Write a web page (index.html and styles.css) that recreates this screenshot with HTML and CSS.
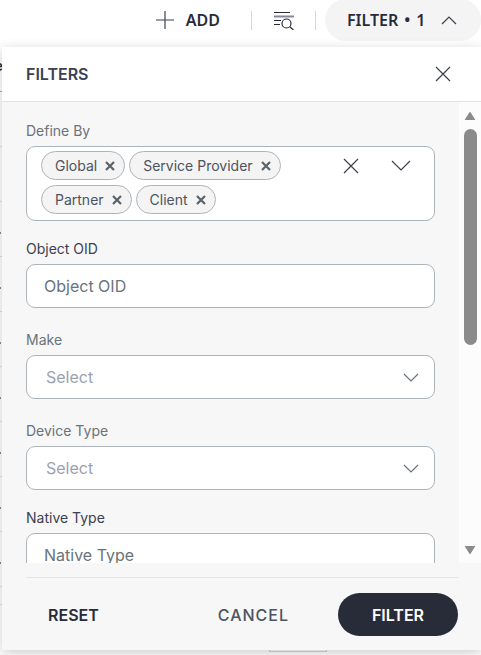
FILE: index.html
```html
<!DOCTYPE html>
<html lang="en">
<head>
<meta charset="utf-8">
<meta name="viewport" content="width=device-width, initial-scale=1">
<title>Filters</title>
<link rel="stylesheet" href="styles.css">
</head>
<body>
<header class="toolbar">
  <button class="add" type="button">
    <svg width="18" height="18" viewBox="0 0 18 18" aria-hidden="true"><path d="M9 0v18M0 9h18"/></svg>
    ADD
  </button>
  <span class="divider"></span>
  <button class="search" type="button" aria-label="Search list">
    <svg width="20" height="19" viewBox="0 0 20 19" aria-hidden="true"><path d="M0 1.5h16M0 9.5h7M0 13.5h6"/><path class="grey" d="M0 5.5h20"/><circle cx="12.5" cy="12.5" r="4.5"/><path d="M16 16l3.5 3"/></svg>
  </button>
  <span class="divider"></span>
  <button class="toggle" type="button" aria-expanded="true">
    <span class="toggle-text"><span>FILTER</span><span>•</span><span>1</span></span>
    <svg width="16" height="9" viewBox="0 0 16 9" aria-hidden="true"><path d="M1 8l7-7 7 7"/></svg>
  </button>
</header>

<main class="rows" aria-hidden="true">
  <div class="row row-head"><span class="cell">e</span></div>
  <div class="row"></div>
  <div class="row"></div>
  <div class="row marked"></div>
  <div class="row marked"></div>
  <div class="row marked"></div>
  <div class="row marked"></div>
  <div class="row marked"></div>
  <div class="row marked"></div>
  <div class="row marked"></div>
  <div class="row row-end"></div>
  <div class="pager"></div>
</main>

<section class="panel" aria-labelledby="panel-title">
  <div class="panel-head">
    <h2 id="panel-title">FILTERS</h2>
    <button class="close" type="button" aria-label="Close">
      <svg width="16" height="16" viewBox="0 0 16 16" aria-hidden="true"><path d="M1 1l14 14M15 1L1 15"/></svg>
    </button>
  </div>

  <div class="panel-body">
    <form class="fields" id="filters">
      <div class="field" role="group" aria-labelledby="define-label">
        <span class="label muted" id="define-label">Define By</span>
        <div class="multi">
          <div class="chips">
            <span class="chip">Global <button type="button" aria-label="Remove Global"><svg width="10" height="10" viewBox="0 0 10 10"><path d="M1 1l8 8M9 1L1 9"/></svg></button></span>
            <span class="chip">Service Provider <button type="button" aria-label="Remove Service Provider"><svg width="10" height="10" viewBox="0 0 10 10"><path d="M1 1l8 8M9 1L1 9"/></svg></button></span>
            <span class="chip">Partner <button type="button" aria-label="Remove Partner"><svg width="10" height="10" viewBox="0 0 10 10"><path d="M1 1l8 8M9 1L1 9"/></svg></button></span>
            <span class="chip">Client <button type="button" aria-label="Remove Client"><svg width="10" height="10" viewBox="0 0 10 10"><path d="M1 1l8 8M9 1L1 9"/></svg></button></span>
          </div>
          <div class="multi-actions">
            <button type="button" aria-label="Clear all"><svg width="16" height="16" viewBox="0 0 16 16"><path d="M1 1l14 14M15 1L1 15"/></svg></button>
            <button type="button" aria-label="Open options"><svg width="20" height="12" viewBox="0 0 20 12"><path d="M1 1l9 9 9-9"/></svg></button>
          </div>
        </div>
      </div>
      <div class="field roomy">
        <label class="label" for="oid">Object OID</label>
        <input class="control" id="oid" type="text" placeholder="Object OID">
      </div>
      <div class="field roomy">
        <label class="label muted" for="make">Make</label>
        <div class="select">
          <select class="control" id="make"><option>Select</option></select>
          <svg width="16" height="9" viewBox="0 0 16 9" aria-hidden="true"><path d="M1 1l7 7 7-7"/></svg>
        </div>
      </div>
      <div class="field">
        <label class="label muted" for="device">Device Type</label>
        <div class="select">
          <select class="control" id="device"><option>Select</option></select>
          <svg width="16" height="9" viewBox="0 0 16 9" aria-hidden="true"><path d="M1 1l7 7 7-7"/></svg>
        </div>
      </div>
      <div class="field">
        <label class="label" for="native">Native Type</label>
        <input class="control" id="native" type="text" placeholder="Native Type">
      </div>
    </form>
    <div class="scrollbar" aria-hidden="true">
      <svg width="12" height="10" viewBox="0 0 12 10"><path d="M6 1.5L10.5 8.5h-9z"/></svg>
      <div class="track"><div class="thumb"></div></div>
      <svg width="12" height="10" viewBox="0 0 12 10"><path d="M6 8.5L10.5 1.5h-9z"/></svg>
    </div>
  </div>

  <div class="panel-foot">
    <button class="reset" type="reset" form="filters">RESET</button>
    <button class="cancel" type="button">CANCEL</button>
    <button class="apply" type="submit" form="filters">FILTER</button>
  </div>
</section>
</body>
</html>
```

FILE: styles.css
```css
* { box-sizing: border-box; }

body {
  position: relative;
  display: flex;
  flex-direction: column;
  height: 100vh;
  margin: 0;
  overflow: hidden;
  background: #fff;
  color: #282c39;
  font-family: Inter, "Liberation Sans", sans-serif;
  font-size: 16px;
}

button {
  padding: 0;
  border: 0;
  background: none;
  color: inherit;
  font: inherit;
  cursor: pointer;
}

svg {
  display: block;
  flex: none;
  fill: none;
  stroke: #3b4150;
  stroke-width: 1.2;
}

.toolbar {
  display: flex;
  flex: none;
  align-items: center;
  justify-content: flex-end;
  height: 40px;
  font-family: "Noto Sans", sans-serif;
  font-weight: 600;
}

.add,
.toggle {
  display: flex;
  align-items: center;
}

.add { gap: 12px; margin-right: 31px; }
.divider { width: 1px; height: 19px; background: #d5d7da; }
.search { margin: 0 21px 0 22px; }
.search svg { stroke: #282c39; }
.search .grey { stroke: #85879a; stroke-width: 2; }

.toggle {
  justify-content: space-between;
  width: 156px;
  height: 42px;
  margin-left: 9px;
  padding: 0 24px 0 22px;
  border-radius: 21px;
  background: #f4f4f4;
}

.toggle-text { display: flex; gap: 6px; }

.rows { flex: 1; min-height: 0; }
.row { height: 55px; border-bottom: 1px solid #dfe1e3; }
.row-head { height: 52px; padding-top: 17px; border-color: #a5a8ac; }
.row-end { height: 18px; }

.cell {
  display: flex;
  justify-content: flex-end;
  width: 3px;
  overflow: hidden;
  font-size: 14px;
  font-weight: 600;
}

.marked::before {
  content: "";
  display: block;
  width: 1px;
  height: 2px;
  margin-top: 30px;
  background: #8a8d92;
}

.marked { display: flow-root; }

.pager {
  width: 58px;
  height: 47px;
  margin-left: 56%;
  border: 1px solid #d3d5dc;
}

.panel {
  position: absolute;
  inset: 47px 0 5px 2px;
  display: flex;
  flex-direction: column;
  background: #f7f7f7;
  box-shadow: 0 3px 12px rgba(0, 0, 0, 0.2);
}

.panel-head {
  display: flex;
  flex: none;
  align-items: center;
  justify-content: space-between;
  height: 55px;
  padding: 0 30px 0 24px;
  border-bottom: 1px solid #e3e4e5;
  background: #fff;
}

h2 {
  margin: 0;
  color: #3b4150;
  font-size: 16px;
  font-weight: 600;
}

.panel-body {
  display: flex;
  flex: 1;
  min-height: 0;
}

.fields {
  display: flex;
  flex: 1;
  flex-direction: column;
  gap: 18px;
  padding: 19px 24px 0;
  overflow: hidden;
}

.field {
  display: flex;
  flex: none;
  flex-direction: column;
  gap: 5px;
}

.roomy { margin-bottom: 4px; }

.label {
  color: #3b4150;
  font-size: 14px;
  line-height: 20px;
}

.muted { color: #69737a; }

.control,
.multi {
  width: 100%;
  border: 1px solid #adb5bb;
  border-radius: 9px;
  background: #fff;
}

.control {
  height: 44px;
  padding: 0 17px;
  font: inherit;
}

.control::placeholder { color: #69737a; opacity: 1; }

.multi {
  display: flex;
  align-items: flex-start;
  justify-content: space-between;
  padding: 4px 23px 6px 14px;
}

.chips {
  display: flex;
  flex-wrap: wrap;
  gap: 5px 4px;
}

.chip {
  display: flex;
  align-items: center;
  gap: 8px;
  height: 29px;
  padding: 0 9px 0 13px;
  border: 1px solid #adb5bb;
  border-radius: 15px;
  background: #f4f4f4;
  color: #4c5361;
  font-size: 14px;
}

.chip svg { stroke: #59636b; stroke-width: 2.2; }

.multi-actions {
  display: flex;
  flex: none;
  align-items: center;
  gap: 32px;
  height: 30px;
}

.select {
  display: grid;
  align-items: center;
}

.select > * { grid-area: 1 / 1; }
.select svg { justify-self: end; margin-right: 16px; stroke: #69737a; pointer-events: none; }

select.control {
  appearance: none;
  padding: 0 44px 0 19px;
  color: #9ba1b0;
}

.scrollbar {
  display: flex;
  flex: none;
  flex-direction: column;
  align-items: center;
  gap: 8px;
  width: 22px;
  padding: 9px 0 8px;
  background: #fcfcfc;
}

.scrollbar svg { fill: #8b8b8b; stroke: #8b8b8b; stroke-linejoin: round; }
.track { flex: 1; width: 13px; }
.thumb { height: 53%; border-radius: 7px; background: #8b8b8b; }

.panel-foot {
  display: flex;
  flex: none;
  align-items: center;
  justify-content: space-between;
  margin: 14px 23px 0 24px;
  padding: 15px 0 14px 22px;
  border-top: 1px solid #e3e4e5;
  font-weight: 600;
}

.cancel {
  margin-left: 70px;
  color: #4c5361;
  font-weight: 500;
  letter-spacing: 1px;
}

.apply {
  width: 120px;
  height: 43px;
  border-radius: 22px;
  background: #282c39;
  color: #fff;
}
```
